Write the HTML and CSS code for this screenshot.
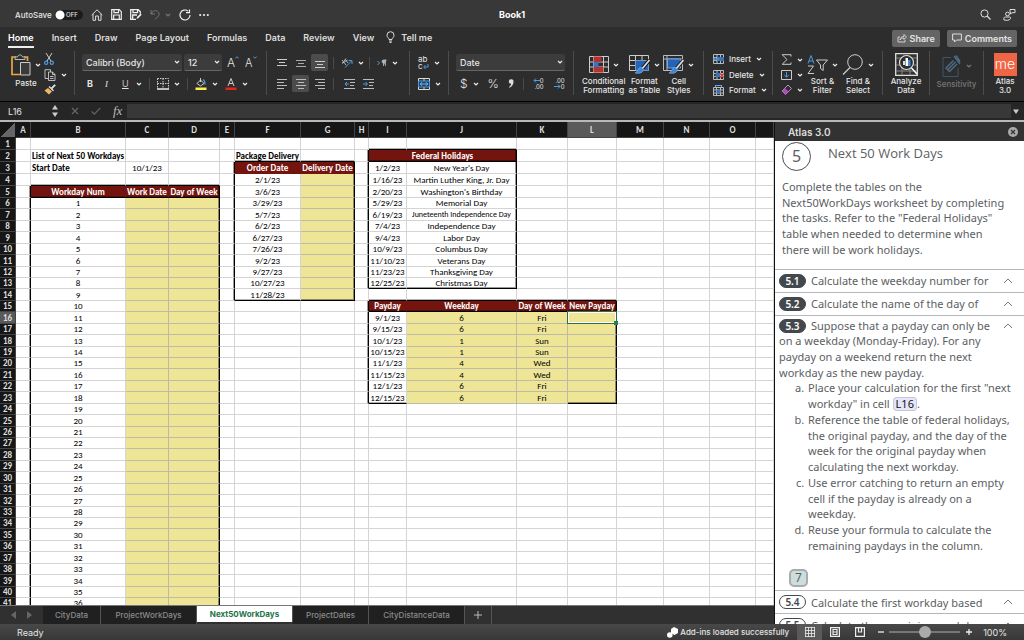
FILE: index.html
```html
<!DOCTYPE html>
<html lang="en">
<head>
<meta charset="utf-8">
<title>Book1</title>
<link rel="stylesheet" href="styles.css">
</head>
<body>
<svg class="defs" aria-hidden="true">
  <symbol id="chev" viewBox="0 0 6 6"><path d="M1 2l2 2 2-2" fill="none" stroke="currentColor" stroke-width="1.2"/></symbol>
  <symbol id="up" viewBox="0 0 10 6"><path d="M1 5l4-4 4 4" fill="none" stroke="currentColor" stroke-width="1"/></symbol>
</svg>
<div class="app">
  <header class="titlebar">
    <div class="quick">
      <label class="autosave">AutoSave <input type="checkbox" class="toggle"><span class="toggle-face">OFF</span></label>
      <button class="ic" aria-label="Home"><svg width="12" height="12" viewBox="0 0 12 12"><path d="M.7 6L6 .8 11.3 6M2 5v6.3h2.600V7h2.800v4.300H10V5" fill="none" stroke="#ddd"/></svg></button>
      <button class="ic" aria-label="Save"><svg width="11" height="11" viewBox="0 0 11 11"><path d="M.7.7h7.600l2 2v7.600H.7zM3 .7v3h4.500v-3M2.700 10V6h5.600v4" fill="none" stroke="#eee" stroke-width="1.2"/></svg></button>
      <button class="ic" aria-label="Save as"><svg width="12" height="11" viewBox="0 0 12 11"><path d="M6 10.300H.7V.7h7.600l2 2v2M3 .7v3h4.500v-3M2.700 10V6H7" fill="none" stroke="#eee" stroke-width="1.3"/><path d="M6.500 10l.5-2 3.500-3.500 1.200 1.200L8.200 9.300z" fill="#eee"/></svg></button>
      <button class="ic dim" aria-label="Undo"><svg width="10" height="11" viewBox="0 0 10 11"><path d="M1 1v4h4M1 5c1.500-3 4-4 6-3s3 3.500 1 5.500L5 10.500" fill="none" stroke="#777"/></svg><svg class="chev"><use href="#chev"/></svg></button>
      <button class="ic" aria-label="Redo"><svg width="12" height="12" viewBox="0 0 12 12"><path d="M11 6A5 5 0 1 1 9 2M10.500.5v3.200H7" fill="none" stroke="#eee" stroke-width="1.200"/></svg></button>
      <button class="ic" aria-label="More"><svg width="10" height="4" viewBox="0 0 10 4"><g fill="#eee"><circle cx="1.200" cy="2" r="1.100"/><circle cx="5" cy="2" r="1.100"/><circle cx="8.800" cy="2" r="1.100"/></g></svg></button>
    </div>
    <h1 class="doc">Book1</h1>
    <div class="title-right">
      <button class="ic" aria-label="Search"><svg width="11" height="11" viewBox="0 0 11 11"><circle cx="4.500" cy="4.500" r="3.600" fill="none" stroke="#ddd"/><path d="M7 7l3.500 3.500" stroke="#ddd" stroke-width="1.200"/></svg></button>
      <button class="ic" aria-label="Account"><svg width="13" height="13" viewBox="0 0 13 13"><g fill="none" stroke="#ddd"><circle cx="4.500" cy="6" r="1.900"/><path d="M1 12c-.5-2 0-3 1.500-3h4C8 9 8 10 7 11.200s-3 1.300-6 .8M7 1.500h5v3.200H9L7.500 6V4.500H7z"/></g></svg></button>
    </div>
  </header>

  <nav class="tabs">
    <button class="tab on">Home</button><button class="tab">Insert</button><button class="tab">Draw</button><button class="tab">Page Layout</button><button class="tab">Formulas</button><button class="tab">Data</button><button class="tab">Review</button><button class="tab">View</button>
    <button class="tab tell"><svg width="9" height="12" viewBox="0 0 9 12"><path d="M3 8.500C3 7 1 6.500 1 4.200a3.500 3.500 0 0 1 7 0C8 6.500 6 7 6 8.500zM3 10h3M3.500 11.500h2" fill="none" stroke="#ddd"/></svg>Tell me</button>
    <div class="tab-actions">
      <button class="pill"><svg width="10" height="10" viewBox="0 0 10 10"><path d="M3 4H1v5h7V7M3 7c0-2 1.500-3.500 4-3.500V1.500L9.500 4 7 6.500V5C5 5 4 5.500 3 7z" fill="none" stroke="#ddd" stroke-width=".9"/></svg>Share</button>
      <button class="pill"><svg width="10" height="10" viewBox="0 0 10 10"><path d="M.6 1h8.800v6H4.500L2.500 9V7H.6z" fill="none" stroke="#ddd"/></svg>Comments</button>
    </div>
  </nav>

  <div class="ribbon">
    <section class="group clipboard">
      <div class="big">
        <div class="big-ic"><svg width="20" height="22" viewBox="0 0 20 22"><path d="M5 3H1v17.500h8M13 3h3.500v4" fill="none" stroke="#e9a646" stroke-width="1.700"/><path d="M4 5.500V3h2.500C7 .2 11 .2 11.500 3H14v2.500z" fill="#2d2d2d" stroke="#bbb"/><path d="M9.500 8.500h9.500V21H9.500z" fill="#3a3a3a" stroke="#ccc"/></svg><svg class="chev"><use href="#chev"/></svg></div>
        <span>Paste</span>
      </div>
      <div class="stack">
        <button class="ic" aria-label="Cut"><svg width="10" height="12" viewBox="0 0 10 12"><path d="M2 0l5 8M8 0L3 8" stroke="#ccc"/><g fill="none" stroke="#4a9be0" stroke-width="1.200"><circle cx="2.200" cy="9.700" r="1.600"/><circle cx="7.800" cy="9.700" r="1.600"/></g></svg></button>
        <button class="ic" aria-label="Copy"><svg width="12" height="12" viewBox="0 0 12 12"><path d="M4 9.500H1V.7h5.500V3M4.500 3h4l2.500 2.500v6H4.500zM8.500 3v2.500H11M6 7.500h3.500M6 9.500h3.500" fill="none" stroke="#ccc" stroke-width=".9"/></svg><svg class="chev"><use href="#chev"/></svg></button>
        <button class="ic" aria-label="Format painter"><svg width="12" height="11" viewBox="0 0 12 11"><path d="M7 4l3.500-3.500 1 1L8 5" fill="#ddd" stroke="#ddd" stroke-width=".6"/><path d="M5 2.500l4.500 4.300" stroke="#ddd" stroke-width="1.500"/><path d="M4 4L.5 6.500 5 10.500 8 7.500z" fill="#edb75e"/></svg></button>
      </div>
    </section>
    <section class="group font">
      <div class="row">
        <label class="sel wide"><select aria-label="Font"><option>Calibri (Body)</option></select><svg class="chev"><use href="#chev"/></svg></label>
        <label class="sel small"><select aria-label="Font size"><option>12</option></select><svg class="chev"><use href="#chev"/></svg></label>
        <button class="ic size" aria-label="Grow font">A<svg width="4" height="3" viewBox="0 0 4 3"><path d="M.3 2.500L2 .7l1.700 1.800" fill="none" stroke="#4a9be0"/></svg></button>
        <button class="ic size shrink" aria-label="Shrink font">A<svg width="4" height="3" viewBox="0 0 4 3"><path d="M.3.5L2 2.300 3.700.5" fill="none" stroke="#4a9be0"/></svg></button>
      </div>
      <div class="row fmt">
        <button class="ic b">B</button><button class="ic i">I</button><button class="ic u">U</button><svg class="chev"><use href="#chev"/></svg><i class="sep"></i>
        <button class="ic" aria-label="Borders"><svg width="12" height="12" viewBox="0 0 12 12"><path d="M.5.5h11v10M.5.5v10M6 .5v10M.5 5.500h11" stroke="#ccc" fill="none" stroke-dasharray="1.500 1"/><path d="M0 11h12" stroke="#eee" stroke-width="1.500"/></svg><svg class="chev"><use href="#chev"/></svg></button><i class="sep"></i>
        <button class="ic" aria-label="Fill"><svg width="12" height="12" viewBox="0 0 12 12"><path d="M2 5.500L5.500 2 9 5.500 5.500 8zM5.500 0v4" fill="none" stroke="#ddd" stroke-width=".9"/><path d="M8 1.500c2 1 2 3 2 5" stroke="#4a9be0" fill="none" stroke-width="1.300"/><path d="M.5 9.500h11V12H.5z" fill="#fff04a"/></svg><svg class="chev"><use href="#chev"/></svg></button>
        <button class="ic" aria-label="Font color"><svg width="12" height="12" viewBox="0 0 12 12"><path d="M3 8l3-7.500L9 8M4 5.500h4" fill="none" stroke="#ccc"/><path d="M.5 9.500h11V12H.5z" fill="#e2281c"/></svg><svg class="chev"><use href="#chev"/></svg></button>
      </div>
    </section>
    <section class="group align">
      <div class="row">
        <button class="ic box" aria-label="Top align"><svg width="10" height="10" viewBox="0 0 10 10"><path d="M0 1.500h10M2 4.500h6M0 7.500h10" stroke="#ccc"/></svg></button>
        <button class="ic box" aria-label="Middle align"><svg width="10" height="10" viewBox="0 0 10 10"><path d="M0 2.500h10M2 5.500h6M0 8.500h10" stroke="#aaa"/></svg></button>
        <button class="ic box lit" aria-label="Bottom align"><svg width="10" height="10" viewBox="0 0 10 10"><path d="M0 3.500h10M2 6.500h6M0 9.500h10" stroke="#ccc"/></svg></button><i class="sep"></i>
        <button class="ic" aria-label="Orientation"><svg width="12" height="10" viewBox="0 0 12 10"><path d="M1 2l4 5M5 .5L1.500 5M1 5.500L6.500 2M4 1l3 4" fill="none" stroke="#bbb" stroke-width=".9"/><path d="M4 9.500l6.500-6.500M7.500 2.500h3.500V6" fill="none" stroke="#4a9be0"/></svg><svg class="chev"><use href="#chev"/></svg></button><i class="sep"></i>
        <button class="ic" aria-label="Text direction"><svg width="10" height="8" viewBox="0 0 10 8"><path d="M.5 2l2 2-2 2" fill="none" stroke="#4a9be0"/><path d="M6.500 7V1h3M8.500 1v6M6.500 1C4.500 1 4.500 4 6.500 4" fill="#aaa" stroke="#bbb" stroke-width=".8"/></svg><svg class="chev"><use href="#chev"/></svg></button>
      </div>
      <div class="row">
        <button class="ic box" aria-label="Align left"><svg width="10" height="10" viewBox="0 0 10 10"><path d="M0 .5h10M0 3.500h7M0 6.500h10M0 9.500h7" stroke="#bbb"/></svg></button>
        <button class="ic box lit" aria-label="Center"><svg width="10" height="10" viewBox="0 0 10 10"><path d="M0 .5h10M2 3.500h6M0 6.500h10M2 9.500h6" stroke="#bbb"/></svg></button>
        <button class="ic box" aria-label="Align right"><svg width="10" height="10" viewBox="0 0 10 10"><path d="M0 .5h10M3 3.500h7M0 6.500h10M3 9.500h7" stroke="#bbb"/></svg></button><i class="sep"></i>
        <button class="ic box" aria-label="Decrease indent"><svg width="11" height="10" viewBox="0 0 11 10"><path d="M0 .5h11M6 3.500h5M6 6.500h4M0 9.500h11" stroke="#bbb"/><path d="M5 5H1M3 3L1 5l2 2" fill="none" stroke="#4a9be0"/></svg></button>
        <button class="ic box" aria-label="Increase indent"><svg width="11" height="10" viewBox="0 0 11 10"><path d="M0 .5h11M6 3.500h5M6 6.500h4M0 9.500h11" stroke="#bbb"/><path d="M0 5h4M2.500 3l2 2-2 2" fill="none" stroke="#4a9be0"/></svg></button>
      </div>
    </section>
    <section class="group wrap">
      <div class="row"><button class="ic" aria-label="Wrap text"><span class="abc">ab<br>c<svg width="6" height="5" viewBox="0 0 6 5"><path d="M5 0v3H1M2.500 1L.7 3l1.800 2" fill="none" stroke="#4a9be0"/></svg></span><svg class="chev"><use href="#chev"/></svg></button></div>
      <div class="row"><button class="ic" aria-label="Merge"><svg width="12" height="12" viewBox="0 0 12 12"><path d="M.5.5h11v11H.5zM6 .5v2.500M6 9v2.500" fill="none" stroke="#ddd"/><path d="M.5 3h11v6H.5z" fill="#1d4065" stroke="#4a9be0"/><path d="M2 6h8M4 4.300L2.300 6 4 7.700M8 4.300L9.700 6 8 7.700" fill="none" stroke="#8cc4f2" stroke-width=".9"/></svg><svg class="chev"><use href="#chev"/></svg></button></div>
    </section>
    <section class="group number">
      <div class="row"><label class="sel full"><select aria-label="Number format"><option>Date</option></select><svg class="chev"><use href="#chev"/></svg></label></div>
      <div class="row num"><button class="ic lg">$<svg class="chev"><use href="#chev"/></svg></button><button class="ic lg">%</button><button class="ic lg" aria-label="Comma style"><svg width="6" height="9" viewBox="0 0 6 9"><path d="M3 .3a2.300 2.300 0 0 1 2.500 2.500C5.500 5.500 4 7.700 1.500 8.700L1 8c1.300-.8 2-2 2.100-3.200A2.200 2.200 0 1 1 3 .3z" fill="#ddd"/></svg></button><i class="sep"></i>
        <button class="ic dec" aria-label="Increase decimal"><span><svg width="7" height="5" viewBox="0 0 7 5"><path d="M7 2.500H1M3 .5l-2 2 2 2" fill="none" stroke="#4a9be0"/></svg>0<br>.00</span></button>
        <button class="ic dec" aria-label="Decrease decimal"><span>.00<br><svg width="7" height="5" viewBox="0 0 7 5"><path d="M0 2.500h6M4 .5l2 2-2 2" fill="none" stroke="#4a9be0"/></svg>0</span></button></div>
    </section>
    <section class="group styles">
      <div class="big"><div class="big-ic"><svg width="20" height="17" viewBox="0 0 20 17"><path d="M.5.500h19v16H.5zM.5 6h19M.5 11h19M4.500.5v16M14.500.5v16" fill="none" stroke="#ccc"/><path d="M4.500.5h8v5.500h-8zM4.500 11h10v5.500h-10z" fill="#b5322e"/><path d="M4.500 6h5v5h-5z" fill="#2f75c8"/></svg><svg class="chev"><use href="#chev"/></svg></div><span>Conditional<br>Formatting</span></div>
      <div class="big"><div class="big-ic"><svg width="21" height="19" viewBox="0 0 21 19"><path d="M.5.500h19v15H.5zM.5 5.500h19M.5 10.500h19M6.500.5v15M13 .5v15" fill="none" stroke="#ccc"/><path d="M6.500 5.500h13v10h-13z" fill="#2463b5"/><path d="M20.500 5l-8 9.500" stroke="#111" stroke-width="3.600"/><path d="M20.500 5l-8 9.500" stroke="#ddd" stroke-width="1.800"/><path d="M12 12l2.500 2.500C14 18 10 19 6 18c3-1 2.500-5 6-6z" fill="#3d87d8" stroke="#9cc6f0" stroke-width=".5"/></svg><svg class="chev"><use href="#chev"/></svg></div><span>Format<br>as Table</span></div>
      <div class="big"><div class="big-ic"><svg width="21" height="19" viewBox="0 0 21 19"><path d="M.5.500h19v15H.5zM.5 4h19M4 .5v15" fill="none" stroke="#bbb"/><path d="M4.500 4h13v9h-13z" fill="#2463b5" stroke="#6aa9ea"/><path d="M20.500 5l-8 9.500" stroke="#222" stroke-width="3.600"/><path d="M20.500 5l-8 9.500" stroke="#ddd" stroke-width="1.800"/><path d="M12 12l2.500 2.500C14 18 10 19 6 18c3-1 2.500-5 6-6z" fill="#3d87d8" stroke="#9cc6f0" stroke-width=".5"/></svg><svg class="chev"><use href="#chev"/></svg></div><span>Cell<br>Styles</span></div>
    </section>
    <section class="group cells">
      <button class="ic line"><svg width="11" height="10" viewBox="0 0 11 10"><path d="M.5.500h10v9H.5zM.5 3.500h10M.5 6.500h10M4 .5v9M7.500.5v9" fill="none" stroke="#bbb"/><path d="M4 3h7v4H4z" fill="#2f75c8"/><path d="M6 5H0M2.500 3L.5 5l2 2" fill="none" stroke="#5aa9ee"/></svg>Insert<svg class="chev"><use href="#chev"/></svg></button>
      <button class="ic line"><svg width="11" height="10" viewBox="0 0 11 10"><path d="M.5.500h10v9H.5zM.5 3.500h10M.5 6.500h10M4 .5v9M7.500.5v9" fill="none" stroke="#bbb"/><path d="M2.500 3H7v4H2.500z" fill="#2f75c8"/><path d="M7 3.500l4 4M11 3.500l-4 4" stroke="#e0453c" stroke-width="1.200"/></svg>Delete<svg class="chev"><use href="#chev"/></svg></button>
      <button class="ic line"><svg width="11" height="11" viewBox="0 0 11 11"><path d="M.5 2.500h10v8H.5zM.5 5h10M.5 8h10M3.500 2.500v8M7.500 2.500v8" fill="none" stroke="#bbb"/><path d="M3.500 5h4v3h-4z" fill="#2f75c8"/><path d="M2.500.5h6M2.500 0v2M8.500 0v2" stroke="#5aa9ee"/></svg>Format<svg class="chev"><use href="#chev"/></svg></button>
    </section>
    <section class="group editing">
      <div class="stack">
        <button class="ic" aria-label="AutoSum"><svg width="11" height="11" viewBox="0 0 11 11"><path d="M10 2.500V.7H1.200L6 5.500l-4.800 4.800H10V8.500" fill="none" stroke="#ccc"/></svg><svg class="chev"><use href="#chev"/></svg></button>
        <button class="ic" aria-label="Fill down"><svg width="11" height="10" viewBox="0 0 11 10"><path d="M.5.500h10v9H.5z" fill="none" stroke="#ccc"/><path d="M5.500 2v5M3.300 5l2.200 2.200L7.700 5" fill="none" stroke="#4a9be0"/></svg><svg class="chev"><use href="#chev"/></svg></button>
        <button class="ic" aria-label="Clear"><svg width="11" height="11" viewBox="0 0 11 11"><path d="M1 7l6-6 3.500 3.500-6 6z" fill="none" stroke="#c88ad0"/><path d="M1 7l3-3 3.500 3.500-3 3z" fill="#a94fb5"/></svg><svg class="chev"><use href="#chev"/></svg></button>
      </div>
      <div class="big"><div class="big-ic"><svg width="21" height="19" viewBox="0 0 21 19"><path d="M1 8.500l3-8 3 8M2 6h4" fill="none" stroke="#4a9be0"/><path d="M1 11h5.500L1 18.500h6" fill="none" stroke="#ccc"/><path d="M9.500 5h11l-4.300 5v5.500L13.500 13.500V10z" fill="none" stroke="#ccc"/></svg><svg class="chev"><use href="#chev"/></svg></div><span>Sort &amp;<br>Filter</span></div>
      <div class="big"><div class="big-ic"><svg width="22" height="21" viewBox="0 0 22 21"><circle cx="13" cy="8" r="7.300" fill="none" stroke="#ccc"/><path d="M8 13.500L1 20.500" stroke="#ccc" stroke-width="1.200"/></svg><svg class="chev"><use href="#chev"/></svg></div><span>Find &amp;<br>Select</span></div>
    </section>
    <section class="group analyze"><div class="big"><div class="big-ic"><svg width="23" height="23" viewBox="0 0 23 23"><path d="M.7.700h21.600v21.600H.7z" fill="#333" stroke="#ddd" stroke-width="1.300"/><path d="M1 5h21M1 12h21M1 18h21M7 14v8M15 14v8" stroke="#888"/><circle cx="11.500" cy="9.500" r="7" fill="#2d2d2d" stroke="#ddd" stroke-width="1.200"/><path d="M8 8h2v4H8z" fill="#ddd"/><path d="M10.500 5h2.500v8h-2.500z" fill="#fff"/><path d="M13 7h2.500v6H13z" fill="#3f8fe0"/><path d="M16.500 15l5.500 6" stroke="#fff" stroke-width="1.500"/></svg></div><span>Analyze<br>Data</span></div></section>
    <section class="group sens"><div class="big"><div class="big-ic"><svg width="20" height="22" viewBox="0 0 20 22"><path d="M9 2.500H1v19h15V13" fill="none" stroke="#3c566b"/><path d="M12 1l6 8M14 .5l4 6M3.500 13.500l8-8M5.500 15l8-8M7 17l8-8M4 13l4 4" fill="none" stroke="#4a6b85" stroke-width="1.500"/></svg><svg class="chev"><use href="#chev"/></svg></div><span>Sensitivity</span></div></section>
    <section class="group atlas"><div class="big"><div class="big-ic"><span class="me">me</span></div><span>Atlas<br>3.0</span></div></section>
  </div>

  <div class="formula">
    <input class="name" aria-label="Name box" value="L16">
    <svg class="updown" width="6" height="14" viewBox="0 0 6 14"><path d="M3 1l3 4.500H0zM3 13l3-4.500H0z" fill="#ccc"/></svg>
    <button class="ic" aria-label="Cancel"><svg width="8" height="8" viewBox="0 0 8 8"><path d="M1 1l6 6M7 1L1 7" stroke="#666" stroke-width="1.200"/></svg></button>
    <button class="ic" aria-label="Enter"><svg width="10" height="8" viewBox="0 0 10 8"><path d="M.7 4.500l2.600 2.600L9.300.8" fill="none" stroke="#666" stroke-width="1.200"/></svg></button>
    <button class="ic fx">fx</button>
    <input class="fbar" aria-label="Formula">
    <svg width="6" height="5" viewBox="0 0 6 5"><path d="M0 .5h6L3 5z" fill="#ccc"/></svg>
  </div>

  <main class="work">
    <div class="book">
      <div class="sheet"><table class="grid" id="grid"></table></div>
      <div class="sheettabs">
        <div class="nav"><svg width="5" height="8" viewBox="0 0 5 8"><path d="M5 0v8L0 4z" fill="#666"/></svg><svg width="5" height="8" viewBox="0 0 5 8"><path d="M0 0v8l5-4z" fill="#666"/></svg></div>
        <button class="st t1">CityData</button><button class="st t2">ProjectWorkDays</button><button class="st t2 on">Next50WorkDays</button><button class="st t3">ProjectDates</button><button class="st t2">CityDistanceData</button><button class="st plus" aria-label="Add sheet"><svg width="8" height="8" viewBox="0 0 8 8"><path d="M4 0v8M0 4h8" stroke="#bbb"/></svg></button>
      </div>
    </div>
    <aside class="pane">
      <div class="pane-head"><h2>Atlas 3.0</h2><button class="ic" aria-label="Close"><svg width="10" height="10" viewBox="0 0 10 10"><circle cx="5" cy="5" r="5" fill="#aaa"/><path d="M3 3l4 4M7 3L3 7" stroke="#333" stroke-width="1.200"/></svg></button></div>
      <div class="pane-body">
        <div class="step"><span class="circle">5</span><h3>Next 50 Work Days</h3></div>
        <p class="intro">Complete the tables on the<br>Next50WorkDays worksheet by completing<br>the tasks. Refer to the "Federal Holidays"<br>table when needed to determine when<br>there will be work holidays.</p>
        <div class="task one"><span class="badge">5.1</span><span class="cut">Calculate the weekday number for</span><svg class="up"><use href="#up"/></svg></div>
        <div class="task one"><span class="badge">5.2</span><span class="cut">Calculate the name of the day of</span><svg class="up"><use href="#up"/></svg></div>
        <div class="task whole">
          <svg class="up"><use href="#up"/></svg>
          <p><span class="badge">5.3</span>Suppose that a payday can only be<br>on a weekday (Monday-Friday). For any<br>payday on a weekend return the next<br>workday as the new payday.</p>
          <ol>
            <li>Place your calculation for the first "next<br>workday" in cell <span class="ref">L16</span>.</li>
            <li>Reference the table of federal holidays,<br>the original payday, and the day of the<br>week for the original payday when<br>calculating the next workday.</li>
            <li>Use error catching to return an empty<br>cell if the payday is already on a<br>weekday.</li>
            <li>Reuse your formula to calculate the<br>remaining paydays in the column.</li>
          </ol>
          <span class="pts">7</span>
        </div>
        <div class="task one"><span class="badge open">5.4</span><span class="cut">Calculate the first workday based</span><svg class="up"><use href="#up"/></svg></div>
        <div class="task one"><span class="badge open">5.5</span><span class="cut">Calculate the remaining workdays</span><svg class="up"><use href="#up"/></svg></div>
      </div>
    </aside>
  </main>

  <footer class="status">
    <span class="ready">Ready</span>
    <svg class="addin" width="11" height="11" viewBox="0 0 11 11"><path d="M4 2l3-2 4 2v4L7.500 8 4 6z" fill="#fff"/><circle cx="2.800" cy="8" r="2.800" fill="#fff"/></svg>
    <span class="addins">Add-ins loaded successfully</span>
    <button class="view lit" aria-label="Normal view"><svg width="10" height="10" viewBox="0 0 10 10"><path d="M.5 0v10M3.500 0v10M6.500 0v10M9.500 0v10M0 .5h10M0 3.500h10M0 6.500h10M0 9.500h10" stroke="#eee" stroke-width=".8"/></svg></button>
    <button class="view" aria-label="Page layout view"><svg width="10" height="10" viewBox="0 0 10 10"><path d="M.6.600h8.800v8.800H.6zM3 2.500h4v5H3zM3 5h4" fill="none" stroke="#eee" stroke-width="1.200"/></svg></button>
    <button class="view" aria-label="Page break view"><svg width="10" height="10" viewBox="0 0 10 10"><path d="M.6.600h8.800v8.800H.6zM3.500.5v4.500h3V.5" fill="none" stroke="#eee" stroke-width="1.200"/></svg></button>
    <button class="zoomb" aria-label="Zoom out"><svg width="6" height="6" viewBox="0 0 6 6"><path d="M0 3h6" stroke="#eee" stroke-width="1.300"/></svg></button>
    <input type="range" class="zoom" min="0" max="100" value="50" aria-label="Zoom">
    <button class="zoomb" aria-label="Zoom in"><svg width="6" height="6" viewBox="0 0 6 6"><path d="M0 3h6M3 0v6" stroke="#eee" stroke-width="1.300"/></svg></button>
    <span class="pct">100%</span>
  </footer>
</div>
<script src="script.js"></script>
</body>
</html>
```
FILE: styles.css
```css
* { box-sizing: border-box; }
body { margin: 0; font-family: Inter, "Liberation Sans", sans-serif; font-size: 8px; color: #e4e4e4; }
button, input, select { font: inherit; color: inherit; background: none; border: 0; padding: 0; margin: 0; }
h1, h2, h3, p, ol { margin: 0; font-weight: inherit; font-size: inherit; }
svg { display: block; flex: none; }
.defs { display: none; }
.app { height: 100vh; display: flex; flex-direction: column; overflow: hidden; background: #2d2d2d; }
.chev { width: 6px; height: 6px; color: #eee; }
.ic { display: flex; align-items: center; gap: 5px; flex: none; }
.sep { width: 1px; height: 12px; background: #4a4a4a; flex: none; }

.titlebar { height: 27px; flex: none; background: #383838; display: grid; grid-template-columns: 1fr auto 1fr; align-items: center; padding: 2px 8px 0 15px; }
.quick { display: flex; align-items: center; gap: 8px; }
.autosave { display: flex; align-items: center; gap: 3px; font-weight: 500; }
.toggle { position: absolute; opacity: 0; }
.toggle-face { width: 28px; height: 10px; border-radius: 5px; background: #1c1c1c; font-size: 6px; line-height: 10px; text-align: right; padding-right: 5px; background-image: radial-gradient(circle at 5px 5px, #fff 4px, transparent 5px); }
.dim { color: #777; }
.dim .chev { color: #777; }
.doc { font-size: 9px; font-weight: 700; color: #fff; padding-right: 7px; }
.title-right { display: flex; justify-content: flex-end; gap: 12px; }

.tabs { height: 22px; flex: none; display: flex; align-items: center; gap: 18px; padding: 0 7px 0 8px; font-size: 9px; }
.tab { height: 20px; font-weight: 600; color: #ddd; border-bottom: 2px solid transparent; white-space: nowrap; }
.tab.on { color: #fff; border-color: #eee; }
.tell { display: flex; align-items: center; gap: 6px; margin-left: -6px; }
.tab-actions { margin-left: auto; display: flex; gap: 7px; }
.pill { display: flex; align-items: center; gap: 3px; height: 17px; padding: 0 5px; background: #646464; border-radius: 2px; font-weight: 600; }

.ribbon { height: 53px; flex: none; display: flex; padding: 2px 0 6px; border-bottom: 1px solid #000; }
.group { border-right: 1px solid #4c4c4c; flex: none; display: flex; }
.big { display: flex; flex-direction: column; align-items: center; font-weight: 500; line-height: 9px; text-align: center; white-space: nowrap; }
.big-ic { height: 28px; display: flex; align-items: center; gap: 4px; }
.stack { display: flex; flex-direction: column; justify-content: space-between; padding: 2px 0 0; }
.row { height: 22px; display: flex; align-items: center; }
.clipboard { width: 75px; padding-left: 11px; gap: 3px; }
.font { width: 192px; flex-direction: column; padding: 1px 7px; }
.sel { display: flex; align-items: center; flex: none; height: 17px; background: #3c3c3c; border-bottom: 1px solid #666; border-radius: 2px; padding-right: 2px; font-size: 9px; font-weight: 500; }
.sel select { appearance: none; flex: 1; min-width: 0; padding-left: 4px; outline: 0; }
.wide { width: 100px; margin-right: 2px; }
.small { width: 38px; margin-right: 5px; }
.full { width: 109px; }
.size { font-size: 12px; font-weight: 300; gap: 0; align-items: flex-start; line-height: 14px; margin-right: 6px; }
.shrink { font-size: 11px; }
.fmt { gap: 7px; padding-left: 5px; }
.fmt .ic { font-size: 9px; }
.fmt .b { font-weight: 700; margin-right: 5px; }
.fmt .i { font-style: italic; font-family: "Liberation Serif", serif; margin-right: 7px; }
.fmt .u { text-decoration: underline; font-weight: 300; }
.align { width: 143px; flex-direction: column; padding: 1px 6px; }
.align .row { gap: 2px; }
.box { width: 17px; height: 17px; justify-content: center; border-radius: 2px; }
.align .sep { margin: 0 5px 0 3px; }
.lit { background: #4c4c4c; }
.wrap { width: 39px; flex-direction: column; padding: 1px 7px 0 8px; }
.abc { font-size: 8px; line-height: 7px; text-align: left; width: 11px; }
.abc svg { display: inline-block; }
.number { width: 125px; flex-direction: column; padding: 1px 7px; }
.num { gap: 9px; padding-left: 4px; }
.lg { font-size: 12px; font-weight: 300; }
.dec { font-size: 6px; line-height: 6px; text-align: right; width: 12px; }
.dec svg { display: inline-block; }
.styles { width: 130px; padding-left: 8px; gap: 3px; }
.styles .big, .analyze, .sens, .atlas, .editing { padding-top: 1px; }
.cells { width: 69px; flex-direction: column; justify-content: space-between; padding: 3px 0 0 9px; }
.line { height: 10px; font-weight: 500; }
.editing { width: 110px; padding-left: 8px; gap: 4px; }
.analyze { width: 47px; justify-content: center; }
.sens { width: 54px; justify-content: center; color: #777; }
.sens .chev { color: #777; }
.atlas { width: 42px; justify-content: center; border: 0; }
.me { width: 23px; height: 23px; background: #f06543; color: #fff; font-size: 14px; font-weight: 300; line-height: 22px; }

.formula { height: 18px; flex: none; display: flex; align-items: center; padding-right: 5px; background: #262626; }
.name { width: 52px; padding-left: 8px; font-size: 9px; }
.updown { margin-right: 13px; }
.formula .ic { margin-right: 12px; }
.formula .fx { font: italic 13px "Liberation Serif", serif; color: #bbb; margin-right: 5px; }
.fbar { flex: 1; height: 14px; background: #383838; margin-right: 2px; }

.work { flex: 1; min-height: 0; display: flex; border-top: 2px solid #b8b8b8; }
.book { flex: 1; min-width: 0; display: flex; flex-direction: column; }
.sheet { flex: 1; min-height: 0; overflow: hidden; background: #fff; }
.grid { table-layout: fixed; width: 100%; border-collapse: separate; border-spacing: 0; font-family: Carlito, Lato, sans-serif; font-size: 9px; color: #000; }
.grid th, .grid td { padding: 0; border: solid #d4d4d4; border-width: 0 1px 1px 0; line-height: 10px; height: 11px; text-align: center; white-space: nowrap; }
.grid thead th { height: 16px; background: #161616; color: #ddd; border-color: #444; font-weight: 700; }
.grid tbody th { background: #161616; color: #ddd; border-color: #444; font-weight: 700; }
.grid tbody tr:nth-child(-n+5) > *, .grid tbody tr:nth-child(7n) > *, .grid tbody tr:nth-child(7n+2) > *, .grid tbody tr:nth-child(7n+4) > * { height: 12px; line-height: 11px; }
.grid .corner { background: linear-gradient(135deg, #161616 50%, #666 50%); border-color: #161616; }
.grid .cur { background: #5a5a5a; }
.grid td.title { font-weight: 700; text-align: left; padding-left: 1px; }
.grid td.hd { background: #73140e; color: #fff; font-weight: 700; border-color: #73140e; }
.grid td.y { background: #eee596; border-color: #bdbba8; }
.grid td.er { border-right-color: #000; box-shadow: inset -1px 0 rgba(0, 0, 0, .4); }
.grid td.eb { border-bottom-color: #000; box-shadow: inset 0 -1px rgba(0, 0, 0, .3); }
.grid td.er.eb { box-shadow: inset -1px -1px rgba(0, 0, 0, .4); }
.grid td.fit { font-size: 8px; }
.grid td.active { position: relative; }
.grid td.active::before { content: ""; position: absolute; inset: -1px; border: 1px solid #2f6f45; box-shadow: inset 0 0 0 1px #fff; }
.grid td.active::after { content: ""; position: absolute; right: -2px; bottom: -2px; width: 4px; height: 4px; background: #2f7d4c; }
.c-row { width: 16px; }
.c-nar { width: 15px; }
.c-b { width: 95px; }
.c-c { width: 43px; }
.c-d { width: 51px; }
.c-f { width: 66px; }
.c-g { width: 54px; }
.c-h { width: 14px; }
.c-i { width: 38px; }
.c-j { width: 110px; }
.c-l { width: 49px; }
.c-m { width: 47px; }
.c-n { width: 46px; }

.sheettabs { height: 19px; flex: none; display: flex; align-items: stretch; background: #303030; border-top: 1px solid #777; color: #8c8c8c; font-weight: 500; }
.nav { width: 43px; display: flex; align-items: center; gap: 11px; padding-left: 11px; }
.st { background: #202020; border-right: 1px solid #555; white-space: nowrap; }
.t1 { width: 58px; }
.t2 { width: 96px; }
.t3 { width: 76px; }
.st.on { background: #fff; color: #217346; font-weight: 700; height: 16px; }
.plus { width: 27px; background: #303030; display: flex; align-items: center; justify-content: center; }

.pane { width: 250px; flex: none; border-left: 1px solid #111; background: #fff; color: #5c6063; display: flex; flex-direction: column; font-family: "Noto Sans", "Open Sans", sans-serif; font-size: 11px; line-height: 1.43; }
.pane-head { height: 19px; flex: none; display: flex; align-items: center; justify-content: space-between; background: #323232; color: #ddd; padding: 0 6px 0 13px; font: 600 10px Inter, sans-serif; }
.pane-body { flex: 1; min-height: 0; overflow: hidden; }
.step { display: flex; gap: 17px; padding: 1px 7px 0; }
.circle { width: 29px; height: 29px; border: 1px solid #4a4e52; border-radius: 50%; text-align: center; font-size: 16px; line-height: 27px; }
.step h3 { font-family: "Open Sans", sans-serif; font-size: 13px; line-height: 22px; }
.intro { padding: 8px 7px 11px; }
.task { border-top: 1px solid #b4b8bd; padding: 0 4px; }
.one { display: flex; align-items: center; height: 23px; padding-right: 11px; }
.cut { flex: 1; min-width: 0; white-space: nowrap; }
.badge { display: inline-block; width: 27px; height: 14px; margin-right: 5px; border: 1px solid #43484d; border-radius: 7px; background: #43484d; color: #fff; font-size: 10px; font-weight: 600; line-height: 12px; text-align: center; }
.badge.open { background: #fff; color: #43484d; }
.up { width: 10px; height: 6px; color: #777; }
.whole .up { float: right; margin: 5px 7px 0 5px; }
.task.whole { padding-top: 2px; }
.task ol { list-style: lower-alpha; padding-left: 28px; }
.task li { padding-left: 1px; }
.ref { background: #e6e6fa; color: #111; border-radius: 3px; padding: 0 2px; box-shadow: 0 0 0 1px #c6c6d4; margin: 0 1px; display: inline-block; line-height: 12px; }
.pts { display: block; width: 19px; height: 18px; margin: 16px 0 3px 10px; border: 2px solid #a9acac; border-radius: 5px; background: #cddcdc; text-align: center; font-size: 12px; line-height: 14px; }

.status { height: 16px; flex: none; display: flex; align-items: center; background: linear-gradient(#484848, #383838); font-size: 9px; padding: 0 17px; }
.ready { margin-right: auto; }
.addin { margin-right: 2px; }
.addins { margin-right: 8px; font-size: 8px; font-weight: 500; }
.view { width: 25px; height: 16px; display: flex; align-items: center; justify-content: center; }
.view.lit { background: #5a5a5a; }
.zoomb { margin: 0 5px 0 6px; }
.zoom { appearance: none; width: 71px; height: 12px; }
.zoom::-webkit-slider-runnable-track { height: 2px; background: #777; }
.zoom::-webkit-slider-thumb { appearance: none; width: 12px; height: 12px; margin-top: -5px; border-radius: 50%; background: #aaa; }
.pct { margin-left: 6px; }
```
FILE: script.js
```js
const COLS = "ABCDEFGHIJKLMNOP".split("");
const WIDTH = { A: "nar", B: "b", C: "c", D: "d", E: "nar", F: "f", G: "g", H: "h", I: "i", J: "j", K: "d", L: "l", M: "m", N: "n", O: "n" };
const ROWS = 41;
const cells = {};
const at = (c, r) => (cells[c + r] = cells[c + r] || { text: "", cls: new Set() });
const put = (c, r, text, cls) => { at(c, r).text = text; if (cls) at(c, r).cls.add(cls); };
const column = (c, r, list, cls) => list.forEach((t, i) => put(c, r + i, t, cls));
const range = (c1, r1, c2, r2, cls) => {
  for (let c = COLS.indexOf(c1); c <= COLS.indexOf(c2); c++)
    for (let r = r1; r <= r2; r++) at(COLS[c], r).cls.add(cls);
};
const before = c => COLS[COLS.indexOf(c) - 1];
const outline = (c1, r1, c2, r2) => {
  range(before(c1), r1, before(c1), r2, "er");
  range(c2, r1, c2, r2, "er");
  range(c1, r1 - 1, c2, r1 - 1, "eb");
  range(c1, r2, c2, r2, "eb");
};

put("B", 2, "List of Next 50 Workdays", "title");
put("B", 3, "Start Date", "title");
put("C", 3, "10/1/23");
["Workday Num", "Work Date", "Day of Week"].forEach((t, i) => put("BCD"[i], 5, t, "hd"));
for (let r = 6; r <= ROWS; r++) put("B", r, String(r - 5));
range("C", 6, "D", ROWS, "y");
outline("B", 5, "D", 5);
outline("B", 5, "D", ROWS);

put("F", 2, "Package Delivery", "title");
put("F", 3, "Order Date", "hd");
put("G", 3, "Delivery Date", "hd");
column("F", 4, ["2/1/23", "3/6/23", "3/29/23", "5/7/23", "6/2/23", "6/27/23", "7/26/23", "9/2/23", "9/27/23", "10/27/23", "11/28/23"]);
range("G", 4, "G", 14, "y");
outline("F", 3, "G", 14);

put("I", 2, "Federal Holidays", "hd");
at("I", 2).span = 2;
column("I", 3, ["1/2/23", "1/16/23", "2/20/23", "5/29/23", "6/19/23", "7/4/23", "9/4/23", "10/9/23", "11/10/23", "11/23/23", "12/25/23"]);
column("J", 3, ["New Year's Day", "Martin Luther King, Jr. Day", "Washington's Birthday", "Memorial Day", "Juneteenth Independence Day", "Independence Day", "Labor Day", "Columbus Day", "Veterans Day", "Thanksgiving Day", "Christmas Day"]);
at("J", 7).cls.add("fit");
outline("I", 2, "J", 13);
range("I", 2, "I", 2, "eb");
range("I", 2, "I", 2, "er");

["Payday", "Weekday", "Day of Week", "New Payday"].forEach((t, i) => put("IJKL"[i], 15, t, "hd"));
column("I", 16, ["9/1/23", "9/15/23", "10/1/23", "10/15/23", "11/1/23", "11/15/23", "12/1/23", "12/15/23"]);
column("J", 16, ["6", "6", "1", "1", "4", "4", "6", "6"]);
column("K", 16, ["Fri", "Fri", "Sun", "Sun", "Wed", "Wed", "Fri", "Fri"]);
range("J", 16, "L", 23, "y");
outline("I", 15, "L", 15);
range("H", 16, "H", 23, "er");
range("L", 16, "L", 23, "er");
range("I", 23, "I", 23, "eb");
range("L", 23, "L", 23, "eb");
at("L", 16).cls.add("active");

let html = '<colgroup><col class="c-row">' + COLS.map(c => `<col class="c-${WIDTH[c] || "last"}">`).join("") + "</colgroup>";
html += '<thead><tr><th class="corner"></th>' + COLS.map(c => `<th class="${c === "L" ? "cur" : ""}">${c === "P" ? "" : c}</th>`).join("") + "</tr></thead><tbody>";
for (let r = 1; r <= ROWS; r++) {
  html += `<tr><th class="${r === 16 ? "cur" : ""}">${r}</th>`;
  for (let i = 0; i < COLS.length; i++) {
    const d = cells[COLS[i] + r] || { text: "", cls: new Set() };
    html += `<td class="${[...d.cls].join(" ")}"${d.span ? ` colspan="${d.span}"` : ""}>${d.text}</td>`;
    if (d.span) i += d.span - 1;
  }
  html += "</tr>";
}
document.getElementById("grid").innerHTML = html + "</tbody>";
```
